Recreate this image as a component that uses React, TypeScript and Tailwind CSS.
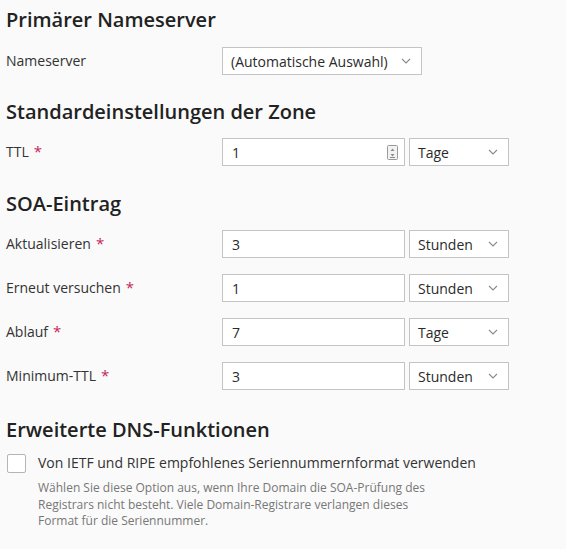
import React from "react";

function Chevron() {
  return (
    <svg width="10" height="6" viewBox="0 0 10 6" className="shrink-0">
      <path d="M1 1l4 4 4-4" fill="none" stroke="#8a8a8a" strokeWidth="1.1" />
    </svg>
  );
}

function Spinner() {
  return (
    <svg width="11" height="15" viewBox="0 0 11 15" className="shrink-0">
      <rect x="0.5" y="0.5" width="10" height="14" rx="1" fill="#f2f2f2" stroke="#9a9a9a" />
      <path d="M5.5 3.5l2 2.5h-4z" fill="#8a8a8a" />
      <path d="M3.5 9h4l-2 2.5z" fill="#8a8a8a" />
      <rect x="3" y="12" width="5" height="1" fill="#8a8a8a" />
    </svg>
  );
}

function Select({ value, width }: { value: string; width: string }) {
  return (
    <div
      className={`flex h-[28px] items-center justify-between border border-[#c4c4c4] bg-white pl-[8px] pr-[10px] text-[14px] text-[#2b2b2b] ${width}`}
    >
      <span>{value}</span>
      <Chevron />
    </div>
  );
}

function Label({ text, required }: { text: string; required?: boolean }) {
  return (
    <div className="w-[216px] shrink-0 pb-[2px] text-[14px] text-[#333]">
      {text}
      {required && <span className="ml-[5px] text-[15px] text-[#c7245a]">*</span>}
    </div>
  );
}

function NumberRow({
  label,
  value,
  unit,
  spinner,
}: {
  label: string;
  value: string;
  unit: string;
  spinner?: boolean;
}) {
  return (
    <div className="flex items-center">
      <Label text={label} required />
      <div className="flex h-[28px] w-[183px] items-center justify-between border border-[#c4c4c4] bg-white pl-[9px] pr-[6px] text-[14px] text-[#2b2b2b]">
        <span>{value}</span>
        {spinner && <Spinner />}
      </div>
      <div className="ml-[4px]">
        <Select value={unit} width="w-[100px]" />
      </div>
    </div>
  );
}

function Heading({ children }: { children: React.ReactNode }) {
  return <h2 className="text-[20px] font-semibold leading-[28px] text-[#222]">{children}</h2>;
}

export default function App() {
  return (
    <div
      className="min-h-[549px] w-[566px] bg-[#fafafa] pl-[6px] pt-[6px]"
      style={{ fontFamily: '"Open Sans", "Noto Sans", sans-serif' }}
    >
      <Heading>Primärer Nameserver</Heading>
      <div className="mt-[13px] flex items-center">
        <Label text="Nameserver" />
        <Select value="(Automatische Auswahl)" width="w-[200px]" />
      </div>

      <div className="mt-[23px]">
        <Heading>Standardeinstellungen der Zone</Heading>
      </div>
      <div className="mt-[12px]">
        <NumberRow label="TTL" value="1" unit="Tage" spinner />
      </div>

      <div className="mt-[24px]">
        <Heading>SOA-Eintrag</Heading>
      </div>
      <div className="mt-[12px] flex flex-col gap-[16px]">
        <NumberRow label="Aktualisieren" value="3" unit="Stunden" />
        <NumberRow label="Erneut versuchen" value="1" unit="Stunden" />
        <NumberRow label="Ablauf" value="7" unit="Tage" />
        <NumberRow label="Minimum-TTL" value="3" unit="Stunden" />
      </div>

      <div className="mt-[26px]">
        <Heading>Erweiterte DNS-Funktionen</Heading>
      </div>
      <div className="mt-[9px] flex items-start">
        <div className="ml-[1px] mt-[1px] h-[19px] w-[19px] shrink-0 rounded-[2px] border border-[#b5b5b5] bg-white" />
        <div className="ml-[12px]">
          <div className="text-[14px] leading-[20px] text-[#333]">
            Von IETF und RIPE empfohlenes Seriennummernformat verwenden
          </div>
          <p className="mt-[7px] w-[400px] text-[12px] leading-[16.5px] text-[#777]">
            Wählen Sie diese Option aus, wenn Ihre Domain die SOA-Prüfung des Registrars nicht besteht. Viele
            Domain-Registrare verlangen dieses Format für die Seriennummer.
          </p>
        </div>
      </div>
    </div>
  );
}
